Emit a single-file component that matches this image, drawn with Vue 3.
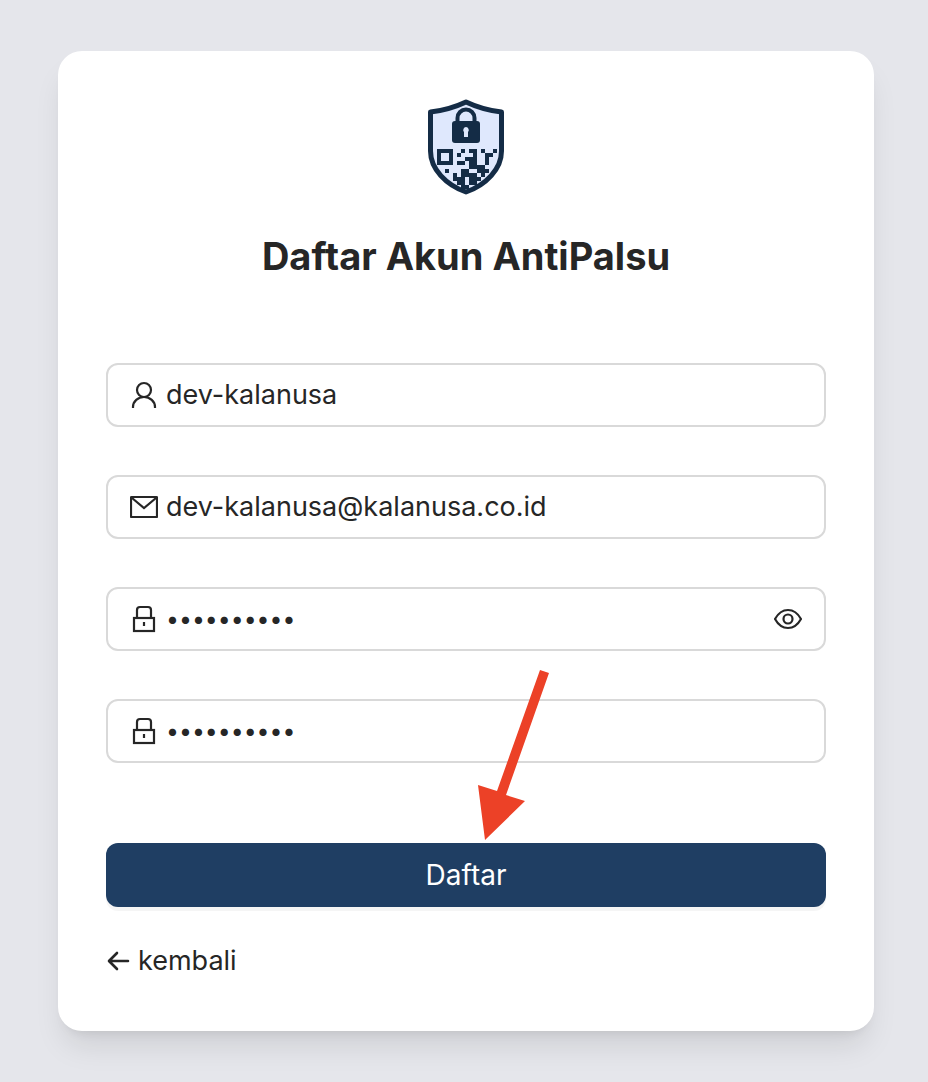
<script setup>
import { ref } from 'vue'

const username = ref('dev-kalanusa')
const email = ref('dev-kalanusa@kalanusa.co.id')
const password = ref('kalanusa12')
const confirmPassword = ref('kalanusa12')
const showPassword = ref(false)

// dark modules of the QR pattern in the logo
const qrRows = [
  '......#.##.#..#',
  '.....#...#..##.',
  '.......###..#..',
  '.....##.##..#..',
  '........####...',
  '..#...##..###..',
  '....#.####.#...',
  '....###.###....',
  '.....##.##.....',
  '......##.......'
]

const modules = qrRows.flatMap((row, y) =>
  [...row].map((cell, x) => ({ cell, x, y })).filter((item) => item.cell === '#')
)
</script>

<template>
  <main class="page">
    <section class="card">
      <svg class="logo" viewBox="0 0 80 96" aria-hidden="true">
        <path class="shield" d="M40 3 Q57 11 75.500 13 V52 C75.500 70 60 86 40 93 C20 86 4.500 70 4.500 52 V13 Q23 11 40 3Z" />
        <path class="shackle" d="M31.500 24V19a8.500 8.500 0 0 1 17 0v5" />
        <rect class="ink" x="26" y="22" width="28" height="22" rx="3" />
        <path class="keyhole" d="M40 28a3 3 0 0 0-2 5v5h4v-5a3 3 0 0 0-2-5z" />
        <rect class="finder" x="13" y="52" width="12" height="12" />
        <rect
          v-for="item in modules"
          :key="`${item.x}-${item.y}`"
          class="ink"
          :x="11 + item.x * 4"
          :y="50 + item.y * 4"
          width="4"
          height="4"
        />
      </svg>

      <h1 class="title">Daftar Akun AntiPalsu</h1>

      <form class="form" @submit.prevent>
        <label class="field">
          <svg class="icon" viewBox="0 0 28 28" aria-hidden="true">
            <circle cx="14" cy="9" r="7" />
            <path d="M3 27v-1c0-5.500 5-10 11-10s11 4.500 11 10v1" />
          </svg>
          <input v-model="username" class="input" type="text" aria-label="Username" />
        </label>

        <label class="field">
          <svg class="icon" viewBox="0 0 28 28" aria-hidden="true">
            <rect x="1" y="4" width="26" height="20" rx="0.5" />
            <path d="M2 5l12 10L26 5" />
          </svg>
          <input v-model="email" class="input" type="email" aria-label="Email" />
        </label>

        <div class="field">
          <svg class="icon" viewBox="0 0 28 28" aria-hidden="true">
            <path d="M7 13V5q0-3 3-3h8q3 0 3 3v8" />
            <rect x="4" y="13" width="20" height="13" />
            <path d="M14 17v4" />
          </svg>
          <input
            v-model="password"
            class="input"
            :class="{ masked: !showPassword }"
            :type="showPassword ? 'text' : 'password'"
            aria-label="Password"
          />
          <button class="toggle" type="button" aria-label="Password" @click="showPassword = !showPassword">
            <svg class="icon" viewBox="0 0 28 28" aria-hidden="true">
              <path d="M1 14Q6 5 14 5T27 14Q22 23 14 23T1 14Z" />
              <circle cx="14" cy="14" r="4.500" />
            </svg>
          </button>
        </div>

        <label class="field">
          <svg class="icon" viewBox="0 0 28 28" aria-hidden="true">
            <path d="M7 13V5q0-3 3-3h8q3 0 3 3v8" />
            <rect x="4" y="13" width="20" height="13" />
            <path d="M14 17v4" />
          </svg>
          <input v-model="confirmPassword" class="input masked" type="password" aria-label="Password" />
        </label>

        <div class="action">
          <svg class="pointer" viewBox="0 0 72 170" aria-hidden="true">
            <path d="M62 0L71 3L28 125L47 131L7 170L0 115L19 121Z" />
          </svg>
          <button class="submit" type="submit">Daftar</button>
        </div>
      </form>

      <a class="back" href="#">
        <svg class="arrow" viewBox="0 0 24 24" aria-hidden="true">
          <path d="M22 12H4M11 4l-8 8 8 8" />
        </svg>
        kembali
      </a>
    </section>
  </main>
</template>

<style>
body {
  margin: 0;
  background: #e5e6eb;
}
</style>

<style scoped>
.page {
  box-sizing: border-box;
  min-height: 100vh;
  padding: 51px 54px 51px 58px;
  background: #e5e6eb;
  color: #262626;
  font-family: Inter, 'Liberation Sans', sans-serif;
  font-size: 27px;
  line-height: 44px;
}

.card {
  display: flex;
  flex-direction: column;
  align-items: center;
  padding: 48px;
  border-radius: 24px;
  background: #fff;
  box-shadow: 0 20px 30px -6px rgba(0, 0, 0, 0.1), 0 8px 12px -8px rgba(0, 0, 0, 0.1);
}

.logo {
  width: 80px;
  height: 96px;
}

.shield {
  fill: #dfe8fd;
  stroke: #142c46;
  stroke-width: 5;
  stroke-linejoin: round;
}

.shackle,
.finder {
  fill: none;
  stroke: #142c46;
  stroke-width: 4;
}

.ink {
  fill: #142c46;
}

.keyhole {
  fill: #dfe8fd;
}

.title {
  margin: 37px 0 83px;
  font-size: 38px;
  font-weight: 700;
  line-height: 48px;
}

.form {
  display: flex;
  flex-direction: column;
  gap: 48px;
  width: 100%;
}

.field {
  display: flex;
  align-items: center;
  box-sizing: border-box;
  height: 64px;
  padding: 0 22px;
  gap: 8px;
  border: 2px solid #d9d9d9;
  border-radius: 12px;
}

.icon {
  flex: none;
  display: block;
  width: 28px;
  height: 28px;
  fill: none;
  stroke: #262626;
  stroke-width: 2.2;
}

.input {
  flex: 1;
  min-width: 0;
  padding: 0;
  border: 0;
  outline: 0;
  background: transparent;
  color: inherit;
  font: inherit;
}

.masked {
  font-size: 23px;
}

.toggle {
  padding: 0;
  border: 0;
  background: transparent;
  cursor: pointer;
}

.action {
  position: relative;
  margin-top: 32px;
}

.pointer {
  position: absolute;
  bottom: 67px;
  left: calc(50% + 12px);
  width: 72px;
  height: 170px;
  fill: #ec4127;
  pointer-events: none;
}

.submit {
  display: block;
  width: 100%;
  height: 64px;
  padding: 0;
  border: 0;
  border-radius: 12px;
  background: #1f3e63;
  box-shadow: 0 4px 0 rgba(0, 0, 0, 0.04);
  color: #fff;
  font: inherit;
  font-size: 28px;
  cursor: pointer;
}

.back {
  display: flex;
  align-items: center;
  align-self: flex-start;
  gap: 8px;
  margin-top: 32px;
  color: inherit;
  text-decoration: none;
}

.arrow {
  width: 24px;
  height: 24px;
  fill: none;
  stroke: #262626;
  stroke-width: 2.6;
  stroke-linecap: round;
  stroke-linejoin: round;
}
</style>
